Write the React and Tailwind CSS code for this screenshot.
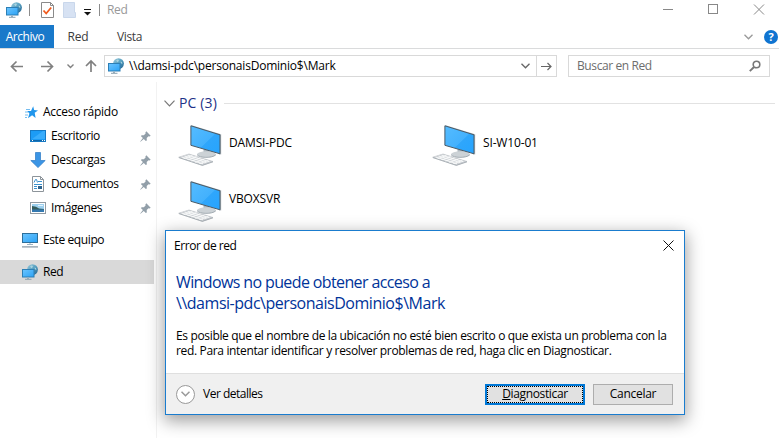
import React from "react";

function NetworkIcon() {
  return (
    <svg width="16" height="16" viewBox="0 0 16 16" className="shrink-0">
      <defs>
        <linearGradient id="globe" x1="0" y1="0" x2="1" y2="1">
          <stop offset="0" stopColor="#9ccbdc" />
          <stop offset="0.5" stopColor="#559fc0" />
          <stop offset="1" stopColor="#1f5f8c" />
        </linearGradient>
        <linearGradient id="screen" x1="0" y1="0" x2="1" y2="1">
          <stop offset="0" stopColor="#6cc5ff" />
          <stop offset="1" stopColor="#2ba2f5" />
        </linearGradient>
      </defs>
      <circle cx="10.5" cy="5.6" r="5.4" fill="url(#globe)" />
      <path d="M8 2.5l2-1.2 1 1.500-1.500 1.500zM12.500 3.500l1.500.5.4 2-1.400-.8z" fill="#a9d3de" />
      <rect x="0.5" y="5.5" width="11.5" height="7.5" fill="url(#screen)" stroke="#2d7fb5" />
      <path d="M6 13.500v1.500" stroke="#9ab0be" strokeWidth="2" />
      <path d="M3 15.300h6.500" stroke="#8aa0ae" />
    </svg>
  );
}

function ComputerSmall() {
  return (
    <svg width="16" height="16" viewBox="0 0 16 16" className="shrink-0">
      <rect x="0.5" y="1.500" width="15" height="9" fill="url(#screen)" stroke="#2d6f9b" />
      <path d="M8 11v1.500M5 12.500h6" stroke="#9db2c0" />
      <path d="M0 14.900h16" stroke="#8595a3" strokeWidth="1.200" />
    </svg>
  );
}

function StarIcon() {
  return (
    <svg width="13" height="13" viewBox="0 0 13 13" className="shrink-0">
      <path d="M8.200.2l.9 3.900 3.900.4-3.300 2.300.9 5.200-3.500-2.700-4.100 3 1.400-4.800-2.200-2.600h3.800z" fill="#2196ec" />
      <path d="M1 3.500h4M0 6h3M0 9h3M0 11.500h2" stroke="#65b5ee" strokeWidth="0.9" />
    </svg>
  );
}

function DesktopIcon() {
  return (
    <svg width="16" height="16" viewBox="0 0 16 16" className="shrink-0">
      <rect x="0.5" y="2.500" width="15" height="11" fill="#1c9cf6" stroke="#1679c4" />
      <path d="M2 11L13 3h2v8z" fill="#39adfc" />
      <path d="M1 12.500h14" stroke="#0f65a8" />
      <path d="M2 12.500h1M12 12.500h1M14 12.500h1" stroke="#fff" />
    </svg>
  );
}

function DownloadIcon() {
  return (
    <svg width="16" height="16" viewBox="0 0 16 16" className="shrink-0">
      <path d="M5.500.5h5v8h4.700L8 15.600.8 8.500h4.700z" fill="#3b95e5" stroke="#2b78c4" strokeWidth="0.7" />
    </svg>
  );
}

function DocumentIcon() {
  return (
    <svg width="16" height="16" viewBox="0 0 16 16" className="shrink-0">
      <path d="M2.500.5h8l3 3v12h-11z" fill="#fff" stroke="#8d949a" />
      <path d="M10.500.5v3h3" fill="none" stroke="#8d949a" />
      <path d="M4 6.500l1.500-3h1l1 3M8 5.500h4M4 8.500h8M4 10.500h3M4 12.500h3" fill="none" stroke="#3a92cf" />
      <rect x="8" y="10" width="4" height="3" fill="#2d628c" />
    </svg>
  );
}

function PictureIcon() {
  return (
    <svg width="16" height="16" viewBox="0 0 16 16" className="shrink-0">
      <rect x="0.5" y="2.500" width="15" height="11" fill="#fff" stroke="#919ba3" />
      <rect x="2" y="4" width="12" height="8" fill="#9dd0ef" />
      <path d="M2 6l4 .8 3 1.700 5 .5v1H2z" fill="#345d5c" />
      <path d="M2 9.500h12V12H2z" fill="#3479b0" />
      <path d="M8 5.500h5" stroke="#e2f3fb" />
    </svg>
  );
}

function PinIcon() {
  return (
    <svg width="11" height="11" viewBox="0 0 11 11" className="shrink-0">
      <path d="M6.300.3L10.700 4.700l-1.200.8-1-.2-1.800 1.800.1 2.300-1 .5-2-2L.5 10.700l-.3-.3 2.700-3.300L1 5.200l.5-1 2.300.1 1.800-1.800-.2-1z" fill="#929fa9" />
    </svg>
  );
}

function BigComputer() {
  return (
    <svg width="44" height="46" viewBox="0 0 44 46" className="shrink-0">
      <defs>
        <linearGradient id="big" x1="0" y1="0" x2="1" y2="1">
          <stop offset="0" stopColor="#55bcff" />
          <stop offset="0.55" stopColor="#43b1fd" />
          <stop offset="0.57" stopColor="#2fa6fb" />
          <stop offset="1" stopColor="#26a4ff" />
        </linearGradient>
      </defs>
      <path d="M13 5L43.200 14.300v20.200L41.500 34.500z" fill="#b9c0c5" />
      <path d="M25.500 29l6 1.800v3.200l-6-1.500z" fill="#aeb8bf" />
      <ellipse cx="28.500" cy="34.300" rx="9.500" ry="3" fill="#ccd2d6" />
      <path d="M19.200 34.800c2 3.300 15 3.600 18.600 0" fill="none" stroke="#949ea6" strokeWidth="0.8" />
      <path d="M12.900 5.800L42 14.800v19L12.900 25.300z" fill="url(#big)" stroke="#4a5a66" strokeWidth="1" />
      <path d="M.8 37.200L11 34l24 7.500-10.500 3.700z" fill="#cfd3d7" stroke="#b5bbc0" strokeWidth="0.6" />
      <path d="M3.500 37l21.500 6.800M6.500 36l22 6.700M9.500 35.100l22 6.700M5 39l9.500-3.700M9 40.200l9.500-3.700M13 41.400l9.500-3.700M17 42.700l9.500-3.700M21 44l9.500-3.700" stroke="#fbfcfc" strokeWidth="0.9" />
      <path d="M.8 37.600l23.500 7.800L35 41.800" fill="none" stroke="#a0a7ad" strokeWidth="0.8" />
    </svg>
  );
}

function Chevron({ className, size = 9, width = 1.3 }) {
  return (
    <svg width={size} height={size / 2 + 1.5} viewBox={`0 0 ${size} ${size / 2 + 1.5}`} fill="none" stroke="currentColor" strokeWidth={width} className={className}>
      <path d={`M.5 .7L${size / 2} ${size / 2 + 0.3}L${size - 0.5} .7`} />
    </svg>
  );
}

function TitleBar() {
  return (
    <div className="flex h-[25px] shrink-0 items-start">
      <div className="flex h-5 w-[660px] items-center pl-1.5">
        <NetworkIcon />
        <span className="ml-[7px] h-3 w-px bg-[#8c8c8c]" />
        <svg width="13" height="16" viewBox="0 0 13 16" className="ml-[11px]">
          <path d="M.5.5h9l3 3v12H.5z" fill="#fff" stroke="#8a8a8a" />
          <path d="M9.500.5v3h3" fill="none" stroke="#8a8a8a" />
          <path d="M2.500 8.500l2.700 3 5-6" fill="none" stroke="#f05a1c" strokeWidth="1.800" />
        </svg>
        <svg width="13" height="16" viewBox="0 0 13 16" className="ml-[9px]">
          <path d="M.5.5h11v10h1v5H.5z" fill="#d7e2f3" stroke="#c9d7eb" />
        </svg>
        <svg width="7" height="7" viewBox="0 0 7 7" className="ml-2 mt-1">
          <path d="M0 .5h7" stroke="#111" />
          <path d="M0 3h7L3.500 6.500z" fill="#111" />
        </svg>
        <span className="ml-2 h-3 w-px bg-[#8c8c8c]" />
        <span className="ml-[7px] text-[12px] tracking-[-0.3px] text-[#999]">Red</span>
      </div>
      <svg width="119" height="19" viewBox="0 0 119 19" fill="none" stroke="#888">
        <path d="M3 9.500h10" />
        <rect x="48.500" y="4.500" width="9" height="9" />
        <path d="M94 4.500l10 10M104 4.500l-10 10" />
      </svg>
    </div>
  );
}

function Ribbon() {
  return (
    <div className="flex h-6 shrink-0 items-center justify-between border-b border-[#dadbdc] text-[12px]">
      <div className="flex h-full items-center">
        <div className="flex h-full w-[54px] items-center justify-center bg-[#1979ca] pr-1 tracking-[-0.45px] text-white">Archivo</div>
        <div className="w-12 text-center tracking-[-0.2px] text-[#3b3b3b]">Red</div>
        <div className="w-[55px] text-center tracking-[-0.4px] text-[#3b3b3b]">Vista</div>
      </div>
      <div className="flex items-center pr-px">
        <Chevron className="mr-[11px] text-[#999]" />
        <span className="flex h-3.5 w-3.5 items-center justify-center rounded-full bg-[#0f74d1] text-[11px] font-bold leading-none text-white">?</span>
      </div>
    </div>
  );
}

function NavBar() {
  return (
    <div className="flex h-[33px] shrink-0 items-center">
      <svg width="104" height="33" viewBox="0 0 104 33" fill="none" stroke="#808080" strokeWidth="1.700" className="shrink-0">
        <path d="M23 17.500H12M16.500 12.500l-5 5 5 5" />
        <path d="M41 17.500h11M47.500 12.500l5 5-5 5" />
        <path d="M67.500 15.500l3 3 3-3" strokeWidth="1.400" />
        <path d="M91 23V12.500M86 17l5-5 5 5" />
      </svg>
      <div className="mt-px flex h-[22px] w-[433px] items-center border border-[#d9d9d9] pl-[3px] pr-1.5">
        <NetworkIcon />
        <span className="ml-[5px] grow whitespace-nowrap text-[12px] tracking-[-0.21px] text-black">\\damsi-pdc\personaisDominio$\Mark</span>
        <Chevron className="text-[#666]" />
      </div>
      <div className="mt-px flex h-[22px] w-5 items-center justify-center border border-l-0 border-[#d9d9d9]">
        <svg width="11" height="9" viewBox="0 0 11 9" fill="none" stroke="#666" strokeWidth="1.200">
          <path d="M0 4.500h10M6.500 1l3.500 3.500L6.500 8" />
        </svg>
      </div>
      <div className="ml-[11px] mt-px flex h-[22px] w-[202px] items-center justify-between border border-[#d9d9d9] pl-2 pr-2">
        <span className="text-[12px] tracking-[-0.4px] text-[#6d6d6d]">Buscar en Red</span>
        <svg width="12" height="12" viewBox="0 0 12 12" fill="none" stroke="#777" strokeWidth="1.600">
          <circle cx="7.500" cy="4.500" r="3.300" />
          <path d="M5 7L.8 11.200" strokeWidth="1.900" />
        </svg>
      </div>
    </div>
  );
}

const quickLinks = [
  { label: "Escritorio", icon: DesktopIcon },
  { label: "Descargas", icon: DownloadIcon },
  { label: "Documentos", icon: DocumentIcon },
  { label: "Imágenes", icon: PictureIcon },
];

function Sidebar() {
  return (
    <nav className="w-[157px] shrink-0 border-r border-[#f2f2f2] pt-[18px] text-[12px] text-black">
      <div className="flex h-6 items-center gap-[5px] pl-[25px]">
        <StarIcon />
        <span className="tracking-[-0.27px]">Acceso rápido</span>
      </div>
      {quickLinks.map(({ label, icon: Icon }) => (
        <div key={label} className="flex h-6 items-center pl-[30px] pr-[5px]">
          <Icon />
          <span className="ml-[5px] grow tracking-[-0.38px]">{label}</span>
          <PinIcon />
        </div>
      ))}
      <div className="mt-2 flex h-6 items-center gap-[5px] pl-[22px]">
        <ComputerSmall />
        <span className="tracking-[-0.4px]">Este equipo</span>
      </div>
      <div className="mt-2 flex h-6 w-[154px] items-center gap-[5px] bg-[#d9d9d9] pl-[22px]">
        <NetworkIcon />
        <span className="tracking-[-0.5px]">Red</span>
      </div>
    </nav>
  );
}

function Content() {
  return (
    <main className="grow pt-[10px]">
      <div className="flex h-[22px] items-center pl-[7px] pr-1">
        <Chevron size={11} width={1.2} className="text-[#777]" />
        <span className="-mt-0.5 ml-[4px] whitespace-nowrap text-[14px] tracking-[0.15px] text-[#1e3287]">PC (3)</span>
        <span className="ml-[7px] h-px grow bg-[#e2e2e2]" />
      </div>
      <div className="grid grid-cols-[254px_254px] pl-[21px] pt-[1px] text-[12px] text-black">
        {["DAMSI-PDC", "SI-W10-01", "VBOXSVR"].map((name) => (
          <div key={name} className="flex h-14 items-center gap-[7px]">
            <BigComputer />
            <span className="tracking-[-0.15px]">{name}</span>
          </div>
        ))}
      </div>
    </main>
  );
}

function ErrorDialog() {
  return (
    <section className="absolute left-[165px] top-[230px] flex h-[185px] w-[520px] flex-col border border-[#1a7cce] bg-white text-black shadow-[0_5px_16px_1px_rgba(0,0,0,0.38)]">
      <header className="flex h-[29px] items-center justify-between pl-2 pr-2.5">
        <span className="text-[12px] tracking-[-0.45px]">Error de red</span>
        <svg width="11" height="11" viewBox="0 0 11 11" stroke="#111" strokeWidth="1">
          <path d="M.5.5l10 10M10.500.5l-10 10" />
        </svg>
      </header>
      <div className="grow whitespace-nowrap pl-[10px] pt-3">
        <h1 className="text-[16px] leading-[21px] text-[#003399]">
          <span className="block tracking-[-0.62px]">Windows no puede obtener acceso a</span>
          <span className="block tracking-[-0.47px]">\\damsi-pdc\personaisDominio$\Mark</span>
        </h1>
        <p className="mt-[14px] text-[12px] leading-[15px] tracking-[-0.345px]">
          Es posible que el nombre de la ubicación no esté bien escrito o que exista un problema con la<br />
          red. Para intentar identificar y resolver problemas de red, haga clic en Diagnosticar.
        </p>
      </div>
      <footer className="flex h-[41px] items-center border-t border-[#dfdfdf] bg-[#f0f0f0] pl-[10px] pr-[11px] text-[12px]">
        <span className="flex h-[19px] w-[19px] items-center justify-center rounded-full border border-[#999] bg-white">
          <Chevron className="text-[#999]" width={1.500} />
        </span>
        <span className="ml-2 grow tracking-[-0.5px]">Ver detalles</span>
        <button className="h-[21px] w-[100px] border-2 border-[#0078d7] bg-[#e1e1e1]">
          <span className="flex h-full items-center justify-center border border-dotted border-black tracking-[-0.35px]"><span><u>D</u>iagnosticar</span></span>
        </button>
        <button className="ml-2 flex h-[21px] w-20 items-center justify-center border border-[#adadad] bg-[#e1e1e1] tracking-[-0.3px]">Cancelar</button>
      </footer>
    </section>
  );
}

export default function App() {
  return (
    <div className="relative flex h-[438px] w-[779px] flex-col overflow-hidden bg-white font-['Open_Sans','Noto_Sans',sans-serif]">
      <TitleBar />
      <Ribbon />
      <NavBar />
      <div className="flex grow">
        <Sidebar />
        <Content />
      </div>
      <ErrorDialog />
    </div>
  );
}
